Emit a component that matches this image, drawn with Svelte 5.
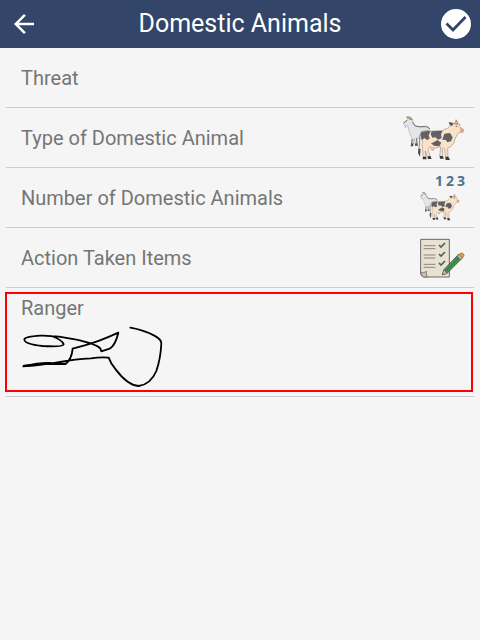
<script>
  const title = 'Domestic Animals';
  const fields = [
    { label: 'Threat', icon: null },
    { label: 'Type of Domestic Animal', icon: 'animals' },
    { label: 'Number of Domestic Animals', icon: 'count' },
    { label: 'Action Taken Items', icon: 'checklist' }
  ];
</script>

{#snippet animals()}
  <g stroke-linejoin="round" stroke-linecap="round">
    <path d="M27 43 L40 33 L53 34 L54 44 L61 53 Q75 58 91 56 L102 60 L106 80 L98 98 L66 88 L65 112 L61 112 L58 90 L54 112 L50 112 L50 88 L43 72 L39 54 L33 52 L31 58 L29 50 Z" fill="#e4e5e8" stroke="#98989c" stroke-width="1.5" />
    <path d="M37 25 Q50 24 52 35 L46 33 Q42 28 36 29 Z" fill="#c9a35e" stroke="#766b56" stroke-width="1.5" />
    <path d="M53 42 L61 53 Q75 57 91 54 Q101 54 104 61 M27 43 L36 36 M52 94 L50 104 M65 91 L66 104" fill="none" stroke="#59575b" stroke-width="2.5" />
    <path d="M49 105 L55 105 L54 114 L47 114 Z M61 105 L67 105 L69 112 L60 112 Z" fill="#4b494e" />
    <path d="M79 69 Q90 64 108 68 L140 67 L159 59 L168 50 L163 42 L175 45 L185 46 L195 48 L193 55 L206 64 L204 72 L191 73 L181 89 L176 105 L167 115 L158 119 L159 147 L151 147 L149 122 L143 120 L142 146 L134 144 L137 115 Q119 124 104 116 L99 125 L106 145 L97 147 L91 128 L93 149 L84 149 L83 123 L81 111 L84 87 Z" fill="#fae2c7" stroke="#9c8c80" stroke-width="1.8" />
    <path d="M81 71 Q96 66 107 69 L101 80 L104 91 L96 95 L88 89 L80 95 Q74 80 81 71 Z M110 69 L143 67 L138 78 L140 89 L130 94 L121 87 L112 88 L107 78 Z M148 76 L165 74 L173 87 L168 99 L157 102 L153 95 L142 94 Z M116 102 L127 95 L139 103 L133 114 L117 112 L108 105 Z" fill="#626067" />
    <path d="M161 42 L174 44 L172 53 L165 51 Z" fill="#55535a" />
    <path d="M80 71 Q72 78 74 96 L72 123" fill="none" stroke="#68605d" stroke-width="2.5" />
    <path d="M77 85 L75 122" fill="none" stroke="#eedac2" stroke-width="2" />
    <path d="M70 121 L77 122 L75 146 L69 134 Z" fill="#514d50" />
    <path d="M177 46 Q184 44 183 34 Q189 40 188 47 Z" fill="#efb54c" stroke="#756044" stroke-width="1.5" />
    <path d="M195 60 Q202 59 206 64 L204 71 L196 70 Z" fill="#e69d8b" />
    <path d="M104 118 Q110 126 118 119 L116 127 L108 126 Z" fill="#e69d8b" />
    <path d="M84 145 L93 145 L95 153 L83 153 Z M98 144 L106 143 L110 152 L99 152 Z M134 143 L143 143 L147 151 L135 151 Z M151 145 L160 145 L165 155 L152 155 Z" fill="#39373b" />
    <circle cx="184" cy="54" r="2" fill="#494348" />
  </g>
{/snippet}

<div class="screen">
  <header>
    <button class="back" type="button" aria-label="Back">
      <svg viewBox="0 0 24 24" width="30" height="30" aria-hidden="true">
        <path d="M20 11H7.83l5.59-5.59L12 4l-8 8 8 8 1.41-1.41L7.83 13H20v-2z" fill="#fff" />
      </svg>
    </button>
    <h1>{title}</h1>
    <button class="save" type="button" aria-label="Save">
      <svg viewBox="0 0 30 30" width="30" height="30" aria-hidden="true">
        <circle cx="15" cy="15" r="15" fill="#fff" />
        <path d="M5.5 14.5 L12 21 L24.5 8" fill="none" stroke="#334568" stroke-width="2.8" />
      </svg>
    </button>
  </header>

  <main>
    {#each fields as field}
      <button class="row" type="button">
        <span>{field.label}</span>
        {#if field.icon === 'animals'}
          <svg viewBox="24 20 186 138" width="62" height="46" aria-hidden="true">{@render animals()}</svg>
        {:else if field.icon === 'count'}
          <span class="count" aria-hidden="true">
            <span class="digits"><b>1</b><b>2</b><b>3</b></span>
            <svg viewBox="24 20 186 138" width="40" height="30">{@render animals()}</svg>
          </span>
        {:else if field.icon === 'checklist'}
          <svg viewBox="30 24 135 120" width="45" height="40" aria-hidden="true">
            <path d="M32 28 H118 V141 H42 Q31 139 32 127 Z" fill="#e9e2d2" stroke="#6d6863" stroke-width="3" />
            <path d="M32 126 Q40 132 49 124 Q48 136 52 141 H42 Q32 139 32 126 Z" fill="#cdc1ae" stroke="#7a6c68" stroke-width="2.5" />
            <path d="M41 47H76M41 56H76M41 75H76M41 84H76M41 103H76M41 112H76" fill="none" stroke="#89857d" stroke-width="3" />
            <path d="M87 45L93 51L105 39M87 72L93 78L105 66M87 99L93 105L105 93" fill="none" stroke="#426653" stroke-width="5" />
            <path d="M97 134 L102 119 L145 74 L156 85 L111 130 Z" fill="#469447" stroke="#4c5749" stroke-width="3" stroke-linejoin="round" />
            <path d="M107 124 L150 80" fill="none" stroke="#2d7540" stroke-width="3" />
            <path d="M97 134 L102 119 L111 130 Z" fill="#ddc79a" stroke="#625a4e" stroke-width="2" />
            <path d="M141 78 L146 72 L158 84 L152 89 Z" fill="#b5bac0" stroke="#606268" stroke-width="2" />
            <path d="M147 73 Q154 65 161 72 Q165 77 157 84 Z" fill="#e9a23b" stroke="#8b6943" stroke-width="2" />
          </svg>
        {/if}
      </button>
    {/each}

    <section class="ranger">
      <h2>Ranger</h2>
      <svg viewBox="63 126 432 186" width="144" height="62" role="img" aria-label="Ranger signature">
        <path d="M391 131 Q432 138 463 155 Q484 166 484 178 Q482 224 469 261 Q452 301 416 306 Q383 304 347 256 Q333 241 326 221 Q302 219 273 223 Q224 226 185 233 Q135 243 70 247 Q123 235 151 237 L198 239 Q215 225 218 194 L254 184 Q294 174 355 146 Q346 184 329 194 L304 202 L301 193 Q287 179 225 166 Q173 154 121 155 Q75 158 73 166 Q72 180 128 186 Q188 190 191 181 Q187 167 153 156" fill="none" stroke="#000" stroke-width="5.5" stroke-linejoin="round" stroke-linecap="round" />
        <path d="M72 245 L135 239 L196 240" fill="none" stroke="#000" stroke-width="6" stroke-linecap="round" />
      </svg>
    </section>
  </main>
</div>

<style>
  :global(body) {
    margin: 0;
    background: #f5f5f5;
  }
  .screen {
    min-height: 100vh;
    font-family: Roboto, sans-serif;
    background: #f5f5f5;
  }
  header {
    display: flex;
    align-items: center;
    justify-content: space-between;
    height: 48px;
    padding: 0 9px;
    background: #334568;
    color: #fff;
  }
  button {
    margin: 0;
    padding: 0;
    border: 0;
    background: none;
    color: inherit;
    font: inherit;
    cursor: pointer;
  }
  svg {
    display: block;
    flex: none;
  }
  h1 {
    margin: 0;
    font-size: 25px;
    font-weight: 400;
    line-height: 34px;
  }
  main {
    padding: 0 6px;
    color: #757575;
  }
  .row {
    display: flex;
    align-items: center;
    justify-content: space-between;
    width: 100%;
    height: 60px;
    padding: 0 9px 0 15px;
    border-bottom: 1px solid #ccc;
    font-size: 20px;
    text-align: left;
  }
  .count {
    display: flex;
    flex-direction: column;
    gap: 4px;
    width: 45px;
  }
  .digits {
    display: flex;
    justify-content: flex-end;
    gap: 3px;
    color: #4b7389;
    font-family: "Open Sans", sans-serif;
    font-size: 14px;
    line-height: 12px;
  }
  .digits b {
    font-weight: 700;
  }
  .ranger {
    position: relative;
    padding: 8px 15px;
    border-bottom: 1px solid #ccc;
  }
  .ranger::after {
    content: "";
    position: absolute;
    inset: 4px 1px 4px -1px;
    border: 2px solid #f00;
    pointer-events: none;
  }
  h2 {
    margin: 0 0 6px;
    font-size: 20px;
    font-weight: 400;
    line-height: 24px;
  }
</style>
